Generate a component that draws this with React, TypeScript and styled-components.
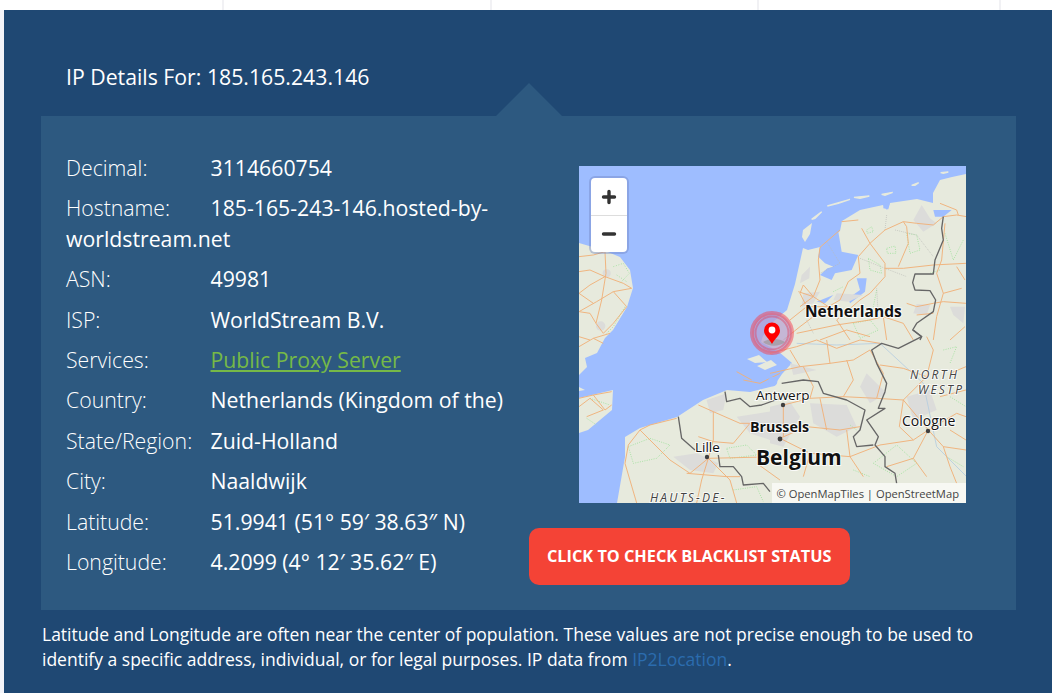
import React from "react";
import styled, { createGlobalStyle } from "styled-components";

const rows: { label: string; value: string; link?: boolean }[] = [
  { label: "Decimal:", value: "3114660754" },
  { label: "Hostname:", value: "185-165-243-146.hosted-by-worldstream.net" },
  { label: "ASN:", value: "49981" },
  { label: "ISP:", value: "WorldStream B.V." },
  { label: "Services:", value: "Public Proxy Server", link: true },
  { label: "Country:", value: "Netherlands (Kingdom of the)" },
  { label: "State/Region:", value: "Zuid-Holland" },
  { label: "City:", value: "Naaldwijk" },
  { label: "Latitude:", value: "51.9941 (51° 59′ 38.63″ N)" },
  { label: "Longitude:", value: "4.2099 (4° 12′ 35.62″ E)" },
];

const LAND = "#e7eadd";
const SEA = "#9ebdff";
const URBAN = "#dcdcda";

// the four groups are traced at 3x from each quarter of the map
const MapDrawing = () => (
  <MapSvg viewBox="0 0 387 337">
    <rect width="387" height="337" fill={SEA} />
    {/* land masses */}
    <path fill={LAND} d="M387 337L38 337L46 291L46 271L61 262L98 251L124 234L148 224L171 226L195 220L203 208L213 197L200 186L182 176L184 170L195 155L208 144L216 118L224 82L229 84L241 81L261 65L263 55L281 44L304 39L308 44L311 37L338 33L354 37L354 27L361 14L373 11L387 8Z" />
    <path fill={LAND} d="M0 77L24 84L41 91L51 104L54 122L48 141L34 164L26 172L18 187L6 192L8 201L0 209Z" />
    <path fill={LAND} d="M0 221L6 224L0 225ZM0 232L34 224L33 244L9 264L0 267Z" />
    <path fill={LAND} d="M223 71L224 64L233 57L231 68L226 76ZM168 193L180 189L188 196L176 197ZM178 200L192 194L198 199L186 204Z" />

    <g transform="translate(-9 -6) scale(0.3333)">
      <g fill={URBAN}>
        <circle cx="110" cy="340" r="12" />
        <circle cx="92" cy="498" r="14" />
      </g>
      <g fill="none" stroke="#a9e2a5" strokeWidth="3" strokeDasharray="3 5">
        <path d="M130 320L160 310L178 340L150 370" />
        <path d="M165 440L130 500L110 520" />
        <path d="M140 345L170 365" />
      </g>
      <g fill="none" stroke="#f0b078" strokeWidth="2.8" strokeLinejoin="round">
        <path d="M27 290L70 285L105 275L108 340L95 420L78 490" />
        <path d="M27 335L60 330L105 350L160 370L185 385" />
        <path d="M27 400L60 375L105 350" />
        <path d="M27 455L80 425L130 395L185 385" />
        <path d="M27 400L70 430M27 455L60 460L78 490L100 520" />
        <path d="M130 395L170 440L130 490L100 520" />
      </g>
    </g>

    <g transform="translate(191 -6) scale(0.3333)">
      <path fill={LAND} stroke={LAND} strokeWidth="4" d="M172 138L240 118L205 130ZM125 178L155 155L135 175ZM252 112L298 108L270 115ZM335 103L368 97L345 106ZM425 76L446 68L435 76ZM512 38L535 36L520 40Z" />
      <g fill={SEA}>
        <path d="M150 262L205 215L215 275L265 285L245 330L195 340L185 360L150 345L172 325L190 320L165 310L145 290Z" />
        <path d="M290 355L285 395L240 430L235 415L270 390L260 355Z" />
        <path d="M140 425L190 405L165 430Z" />
        <path d="M490 150L545 150L520 170L495 170Z" />
        <path d="M340 128L360 130L355 148L340 145Z" />
      </g>
      <g fill={URBAN}>
        <path d="M430 180L455 135L480 175L500 190L460 215Z" />
        <path d="M95 345L120 320L118 355L90 370Z" />
        <path d="M100 400L150 395L130 430L95 440Z" />
        <path d="M200 400L280 405L235 425L190 420Z" />
        <path d="M440 432L480 435L470 465L430 460Z" />
        <path d="M540 440L585 440L580 490L550 465Z" />
      </g>
      <g fill="none" stroke="#a9e2a5" strokeWidth="3" strokeDasharray="3 4">
        <path d="M290 210L305 200L310 215L292 220Z" />
        <path d="M350 265L375 258L378 280L352 280Z" />
        <path d="M410 220L440 225L450 270L420 280Z" />
        <path d="M295 295L330 315L335 340L300 330Z" />
        <path d="M525 220L550 300L580 240M480 340L510 330" />
        <path d="M250 490L300 480L325 510L270 535Z" />
        <path d="M190 395L220 380M320 390L310 440" />
      </g>
      <g fill="none" stroke="#b9bbb6" strokeWidth="2" strokeDasharray="3 3">
        <path d="M170 245L210 310L150 340" />
        <path d="M345 210L350 165M375 210L440 225L490 290" />
        <path d="M270 295L345 325L410 350" />
        <path d="M110 480L130 520M320 385L325 470" />
      </g>
      <g fill="none" stroke="#f0b078" strokeWidth="2.8" strokeLinejoin="round">
        <path d="M215 185L265 180" />
        <path d="M210 210L150 262L145 300L150 360L130 410L90 440" />
        <path d="M275 205L300 250L265 290L270 340L235 365L210 420L175 440L110 440" />
        <path d="M300 250L345 310L345 350L300 400L270 420L200 480" />
        <path d="M345 210L400 185L410 200L415 250L385 320" />
        <path d="M345 210L300 250" />
        <path d="M400 185L440 190L490 195L520 170L560 165L590 170" />
        <path d="M510 130L560 150L565 165" />
        <path d="M525 190L515 300L500 340L520 400L500 470L490 540" />
        <path d="M345 325L400 325L490 315L588 310" />
        <path d="M520 425L588 430M410 430L440 440L490 430L520 425M440 465L490 460" />
        <path d="M40 540L90 500L130 470L110 440L90 400L100 375L130 410" />
        <path d="M80 520L200 495L300 480L340 470L400 490L430 540" />
        <path d="M150 540L230 510L300 530M585 500L540 540" />
        <path d="M85 395L130 410L175 440M60 480L110 440M200 480L240 540M340 470L350 540" />
        <path d="M560 320L585 360M520 400L575 385" />
      </g>
      <path fill="none" stroke="#666" strokeWidth="4" strokeLinejoin="round" d="M520 170L515 205L520 240L495 300L490 342L435 342L428 368L435 390L480 392L497 420L490 455L440 490L428 510L455 530L450 540" />
    </g>

    <g transform="translate(-9 164) scale(0.3333)">
      <g fill={URBAN}>
        <path d="M310 380L380 370L445 400L430 430L360 420Z" />
        <path d="M500 260L630 240L630 340L540 310Z" />
        <path d="M410 210L470 190L460 240L420 250Z" />
      </g>
      <g fill="none" stroke="#a9e2a5" strokeWidth="3" strokeDasharray="3 4">
        <path d="M175 350L240 325L300 345L260 385L190 400Z" />
        <path d="M470 355L530 345L560 375L480 385Z" />
        <path d="M490 480L560 470L580 515" />
        <path d="M60 205L120 225M50 265L80 285" />
      </g>
      <g fill="none" stroke="#f0b078" strokeWidth="2.8" strokeLinejoin="round">
        <path d="M385 225L430 245L510 280L540 280" />
        <path d="M320 265L240 285L210 300L300 390L360 430L415 385" />
        <path d="M430 245L430 330L415 385L395 450L380 519" />
        <path d="M415 385L480 450M165 400L175 345L210 300M165 400L200 519" />
        <path d="M540 280L490 340L430 335L385 320M415 385L630 380M350 430L470 440L510 440" />
        <path d="M27 50L70 25L120 10M70 25L100 40M27 20L60 30" />
        <path d="M27 205L70 195L125 185M27 230L60 205L100 240L50 260M70 195L105 240L125 225" />
        <path d="M520 150L570 160L630 130M500 125L545 150" />
        <path d="M560 400L630 450M600 330L630 300M480 450L500 519" />
      </g>
      <path fill="none" stroke="#666" strokeWidth="4" strokeLinejoin="round" d="M465 185L470 215L510 205L540 230L575 225L630 205" />
      <path fill="none" stroke="#666" strokeWidth="4" strokeLinejoin="round" d="M325 260L335 325L375 360M445 375L450 410L490 410L515 440L520 465L580 460L600 485" />
    </g>

    <g transform="translate(191 164) scale(0.3333)">
      <g fill={URBAN}>
        <path d="M120 220L230 225L260 290L200 320L130 280Z" />
        <path d="M410 200L480 180L500 240L430 270Z" />
        <path d="M60 100L140 120L70 135Z" />
        <path d="M0 230L60 215L90 260L40 350L0 340Z" />
        <path d="M290 130L350 190L300 220L270 170Z" />
        <circle cx="8" cy="155" r="14" fill="#9ebdff" />
      </g>
      <g fill="none" stroke="#a9e2a5" strokeWidth="3" strokeDasharray="3 4">
        <path d="M310 400L380 345L440 400L380 440Z" />
        <path d="M520 60L560 50L540 100M540 200L588 230M530 380L580 410" />
        <path d="M250 420L300 440M240 285L260 300" />
      </g>
      <path fill="none" stroke="#b5cde0" strokeWidth="2.5" d="M80 40L200 45L330 40L460 160L500 350L590 440" />
      <g fill="none" stroke="#f0b078" strokeWidth="2.8" strokeLinejoin="round">
        <path d="M0 70L80 50L140 30L200 55L270 30L330 40" />
        <path d="M0 130L90 110L180 100L250 90L300 60" />
        <path d="M40 225L120 205L220 200L320 205L400 210L475 300" />
        <path d="M40 225L40 320" />
        <path d="M30 325L110 290L210 300L270 290" />
        <path d="M30 325L120 370L240 380L330 345L430 330L475 300" />
        <path d="M475 300L520 350L540 410L560 460" />
        <path d="M475 300L560 250L588 260" />
        <path d="M475 300L430 385L350 410" />
        <path d="M400 210L470 140L490 60L470 20" />
        <path d="M100 110L130 170L120 205M230 90L250 150L220 200M330 105L400 115L470 140" />
        <path d="M400 210L388 290L430 330M120 370L100 440M240 380L280 440" />
        <path d="M540 130L588 110M510 200L588 180" />
        <path d="M170 30L180 100M300 60L340 130L320 205M60 60L90 110M230 300L240 380M150 205L170 300" />
        <path d="M430 385L470 440M540 300L588 330M520 350L588 360" />
      </g>
      <path fill="none" stroke="#666" strokeWidth="4" strokeLinejoin="round" d="M430 0L455 20L385 55L335 40L305 60L320 100L350 160L345 185L325 235L345 235L290 270L325 320L315 345L345 380L345 410L375 430L380 460" />
      <path fill="none" stroke="#666" strokeWidth="4" strokeLinejoin="round" d="M35 160L100 150L145 155L160 190L230 210L285 240L270 300L250 320L260 350L310 345" />
    </g>

    {/* city dots */}
    <g fill="#3f3f3f">
      <circle cx="128" cy="291" r="2.2" />
      <circle cx="204" cy="239" r="2.2" />
      <circle cx="201" cy="273" r="2.4" />
      <circle cx="349" cy="265" r="2.2" />
    </g>

    <MapLabel x="226" y="151" $size={15.5} $weight={700}>Netherlands</MapLabel>
    <MapLabel x="177" y="234" $size={13.5}>Antwerp</MapLabel>
    <MapLabel x="171" y="266" $size={14.2} $weight={700}>Brussels</MapLabel>
    <MapLabel x="177" y="299" $size={21} $weight={700}>Belgium</MapLabel>
    <MapLabel x="116" y="286" $size={13.5}>Lille</MapLabel>
    <MapLabel x="323" y="260" $size={14}>Cologne</MapLabel>
    <RegionLabel x="331" y="213">NORTH</RegionLabel>
    <RegionLabel x="339" y="228">WESTP</RegionLabel>
    <RegionLabel x="71" y="336">HAUTS-DE-</RegionLabel>

    {/* marker */}
    <circle cx="193" cy="167" r="20" fill="#b7a0d2" fillOpacity="0.7" stroke="#f5404f" strokeOpacity="0.5" strokeWidth="4" />
    <circle cx="193" cy="167" r="16.500" fill="none" stroke="#e0405f" strokeOpacity="0.45" strokeWidth="2" />
    <path fill="#8d8a86" fillOpacity="0.5" d="M184 176C190 172 200 172 206 176C200 181 190 181 184 176Z" />
    <path fill="#f00" d="M193 178C190 172 185 170 185 164.500A8 8 0 0 1 201 164.500C201 170 196 172 193 178Z" />
    <circle cx="193" cy="164" r="3.400" fill="#fff" />
  </MapSvg>
);

const App = () => {
  return (
    <>
      <GlobalStyle />
      <TopStrip />
      <Panel>
        <Title>IP Details For: 185.165.243.146</Title>
        <Card>
          <DetailColumn>
            {rows.map((row) => (
              <Row key={row.label}>
                <Label>{row.label}</Label>
                {row.link ? <ServiceLink href="#">{row.value}</ServiceLink> : <Value>{row.value}</Value>}
              </Row>
            ))}
          </DetailColumn>
          <MapColumn>
            <MapBox>
              <MapDrawing />
              <ZoomControl>
                <ZoomButton>
                  <svg width="16" height="16" viewBox="0 0 16 16">
                    <path d="M8 2.500v11M2.500 8h11" stroke="#333" strokeWidth="3.400" strokeLinecap="round" />
                  </svg>
                </ZoomButton>
                <ZoomButton>
                  <svg width="16" height="16" viewBox="0 0 16 16">
                    <path d="M2.500 8h11" stroke="#333" strokeWidth="3.400" strokeLinecap="round" />
                  </svg>
                </ZoomButton>
              </ZoomControl>
              <Attribution>© OpenMapTiles | OpenStreetMap</Attribution>
            </MapBox>
            <BlacklistButton>Click to check blacklist status</BlacklistButton>
          </MapColumn>
        </Card>
        <Note>
          Latitude and Longitude are often near the center of population. These values are not precise enough to be used
          to identify a specific address, individual, or for legal purposes. IP data from{" "}
          <NoteLink href="#">IP2Location</NoteLink>.
        </Note>
      </Panel>
    </>
  );
};

const GlobalStyle = createGlobalStyle`
  html, body {
    margin: 0;
    height: 693px;
    overflow: hidden;
    background: #f3f4f9;
    font-family: "Open Sans", "Liberation Sans", sans-serif;
  }
`;

const TopStrip = styled.div`
  height: 10px;
  background:
    linear-gradient(#f1f1f4, #f1f1f4) 222px 0 / 2px 100% no-repeat,
    linear-gradient(#f1f1f4, #f1f1f4) 490px 0 / 2px 100% no-repeat,
    linear-gradient(#f1f1f4, #f1f1f4) 757px 0 / 2px 100% no-repeat,
    linear-gradient(#f1f1f4, #f1f1f4) 999px 0 / 2px 100% no-repeat,
    #fff;
`;

const Panel = styled.div`
  margin-left: 4px;
  height: 683px;
  padding: 52px 36px 0 37px;
  box-sizing: border-box;
  background: #1f4873;
  color: #fff;
`;

const Title = styled.div`
  padding-left: 25px;
  height: 54px;
  font-size: 21.25px;
  line-height: 30px;
`;

const Card = styled.div`
  position: relative;
  display: grid;
  grid-template-columns: 488px 1fr;
  height: 494px;
  background: #2d5980;

  &::before {
    content: "";
    position: absolute;
    left: 455px;
    top: -33px;
    width: 66px;
    height: 33px;
    background: #2d5980;
    clip-path: polygon(50% 0, 100% 100%, 0 100%);
  }
`;

const DetailColumn = styled.div`
  padding: 37px 15px 0 25px;
`;

const Row = styled.div`
  margin-bottom: 10px;
  font-size: 21.25px;
  line-height: 30.4px;
`;

const Label = styled.span`
  display: inline-block;
  width: 144.5px;
  font-weight: 300;
`;

const Value = styled.span`
  font-weight: 400;
`;

const ServiceLink = styled.a`
  color: #76b947;
  text-decoration: underline;
`;

const MapColumn = styled.div`
  display: flex;
  flex-direction: column;
  align-items: flex-start;
  padding-top: 50px;
`;

const MapBox = styled.div`
  position: relative;
  width: 387px;
  height: 337px;
  margin-left: 50px;
  overflow: hidden;
`;

const MapSvg = styled.svg`
  display: block;
  width: 387px;
  height: 337px;
`;

const MapLabel = styled.text<{ $size: number; $weight?: number }>`
  font-family: "Open Sans", sans-serif;
  font-size: ${(p) => p.$size}px;
  font-weight: ${(p) => p.$weight ?? 400};
  fill: #111;
  stroke: #fff;
  stroke-width: 2px;
  stroke-opacity: 0.85;
  paint-order: stroke;
`;

const RegionLabel = styled.text`
  font-family: "Open Sans", sans-serif;
  font-size: 12px;
  font-style: italic;
  letter-spacing: 2.2px;
  fill: #444;
  stroke: #fff;
  stroke-width: 2px;
  stroke-opacity: 0.7;
  paint-order: stroke;
`;

const ZoomControl = styled.div`
  position: absolute;
  left: 12px;
  top: 12px;
  display: flex;
  flex-direction: column;
  width: 36px;
  border-radius: 4px;
  background: #fff;
  box-shadow: 0 0 0 2px rgba(110, 130, 190, 0.4);
`;

const ZoomButton = styled.div`
  display: flex;
  align-items: center;
  justify-content: center;
  height: 37px;
  box-sizing: border-box;

  & + & {
    border-top: 1px solid #ddd;
  }
`;

const Attribution = styled.div`
  position: absolute;
  right: 0;
  bottom: 0;
  padding: 2px 7px 1px 5px;
  background: rgba(255, 255, 255, 0.65);
  color: #444;
  font-size: 11.2px;
  line-height: 17px;
  white-space: nowrap;
`;

const BlacklistButton = styled.div`
  margin-top: 25px;
  box-sizing: border-box;
  width: 321px;
  height: 57px;
  padding: 0 0 2px 18px;
  display: flex;
  align-items: center;
  border-radius: 10px;
  background: #f44336;
  color: #fff;
  font-size: 16.3px;
  font-weight: 700;
  text-transform: uppercase;
`;

const Note = styled.p`
  margin: 12px 0 0 1px;
  font-size: 17.5px;
  line-height: 25px;
`;

const NoteLink = styled.a`
  color: #2b6cae;
  text-decoration: none;
`;

export default App;
